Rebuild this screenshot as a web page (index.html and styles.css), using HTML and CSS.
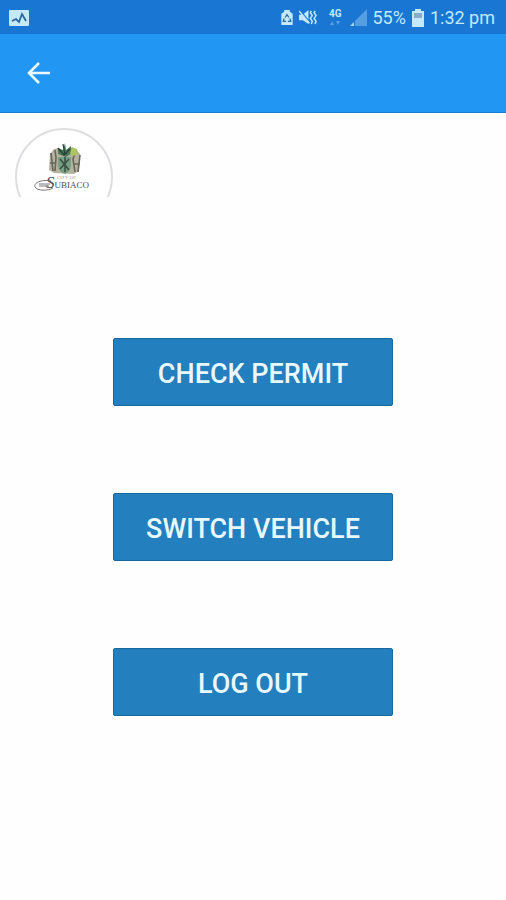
FILE: index.html
```html
<!DOCTYPE html>
<html lang="en">
<head>
<meta charset="utf-8">
<meta name="viewport" content="width=device-width, initial-scale=1">
<title>Permits</title>
<link rel="stylesheet" href="styles.css">
</head>
<body>
<div class="status-bar">
  <svg class="activity-icon" width="20" height="16" viewBox="0 0 20 16" aria-hidden="true">
    <rect width="20" height="16" rx="1" fill="#c3e9fa"/>
    <path d="M3 11l4-2 3 3 3-8 4 7" fill="none" stroke="#28689c" stroke-width="1.8"/>
  </svg>
  <div class="status-info">
    <svg class="saver-icon" width="12" height="17" viewBox="0 0 12 18" aria-hidden="true">
      <path d="M3 3V1h6v2l3 2v12H0V5z" fill="#c3e9fa"/>
      <path d="M4 9l2-3 2 3M9 10l1 3H7M5 13H2l1-3" fill="none" stroke="#28689c" stroke-width="1.3"/>
    </svg>
    <svg class="mute-icon" width="18" height="17" viewBox="0 0 19 18" aria-hidden="true">
      <path d="M0 6h4l6-5v15l-6-4H0z" fill="#c3e9fa"/>
      <path d="M1 2l11 13" stroke="#1976d2" stroke-width="2"/>
      <path d="M0 2l11 13" stroke="#c3e9fa" stroke-width="1.6"/>
      <path d="M13 2l-1 2 2 3-2 3 2 3-1 3M17 2l-1 2 2 3-2 3 2 3-1 3" fill="none" stroke="#c3e9fa" stroke-width="1.6"/>
    </svg>
    <div class="network">
      <span>4G</span>
      <svg width="10" height="5" viewBox="0 0 10 5" aria-hidden="true">
        <path d="M0 4l2-4 2 4zM6 0h4L8 4z" fill="#599fdf"/>
      </svg>
    </div>
    <svg class="signal-icon" width="17" height="17" viewBox="0 0 17 17" aria-hidden="true">
      <path d="M17 0v17H5v-5z" fill="#559fe1"/>
      <path d="M0 17l4-4v4z" fill="#a5d7f5"/>
    </svg>
    <span class="percent">55%</span>
    <svg class="battery-icon" width="12" height="18" viewBox="0 0 12 18" aria-hidden="true">
      <path d="M3 2V0h6v2h3v16H0V2z" fill="#c3e9fa"/>
      <path d="M2 4h8v5H2z" fill="#88acc9"/>
    </svg>
    <time>1:32 pm</time>
  </div>
</div>
<header class="app-bar">
  <button class="back" type="button" aria-label="Back">
    <svg width="24" height="24" viewBox="0 0 24 24" aria-hidden="true">
      <path d="M23 12H2M12 2L2 12l10 10" fill="none" stroke="#edf9ff" stroke-width="2.6"/>
    </svg>
  </button>
</header>
<main>
  <svg class="logo" width="98" height="69" viewBox="0 0 98 69" role="img" aria-label="City of Subiaco">
    <circle cx="49" cy="49" r="48" fill="#fff" stroke="#dedee1" stroke-width="2"/>
    <path d="M35 26l4-5 5-1 2 5 7 0 3-5 5 1 4 5-1 17-5 3-20-1-5-3z" fill="#b5b3a0"/>
    <path d="M36 25l2 18M40 22l1 8-1 13M61 22l-3 9 2 13M65 27l-2 17M35 35h6M58 36h7" fill="none" stroke="#65675b" stroke-width="1.6"/>
    <path d="M43 29h13v9q-1 6-6 8-6-2-7-8z" fill="#789f81"/>
    <path d="M45 31l9 11M54 31l-9 10M50 29v15" stroke="#344d41" stroke-width="1.5"/>
    <path d="M50 15l1 7 5-4 1 7-6 4-8-3 0-6 5 2z" fill="#4a7857"/>
    <path d="M43 20l6 7 6-6M48 16l2 11" fill="none" stroke="#263f35" stroke-width="1.2"/>
    <path d="M57 19l5 2 1 5-5 2-3-3z" fill="#adc461"/>
    <text class="logo-small" x="42" y="51">CITY OF</text>
    <text class="logo-name" x="31" y="60"><tspan class="logo-initial">S</tspan>UBIACO</text>
    <path d="M36 53c-9-2-18 2-16 6 2 4 13 4 18 1M24 56h11M24 58h10" fill="none" stroke="#77767b" stroke-width="1"/>
  </svg>
  <nav class="actions" aria-label="Actions">
    <button type="button">CHECK PERMIT</button>
    <button type="button">SWITCH VEHICLE</button>
    <button type="button">LOG OUT</button>
  </nav>
</main>
</body>
</html>
```
FILE: styles.css
```css
* {
  box-sizing: border-box;
}

body {
  margin: 0;
  background: #fefefe;
  font-family: Roboto, "Liberation Sans", sans-serif;
}

svg {
  display: block;
  flex: none;
}

.status-bar {
  display: flex;
  align-items: center;
  justify-content: space-between;
  height: 34px;
  padding: 1px 11px 0 9px;
  background: #1976d2;
  color: #c3e9fa;
  font-size: 18px;
  line-height: 24px;
}

.status-info {
  display: flex;
  align-items: center;
  gap: 6px;
}

.network {
  display: flex;
  flex-direction: column;
  align-items: center;
  gap: 2px;
  margin: 0 2px 0 6px;
  font-size: 10px;
  font-weight: 700;
  line-height: 10px;
}

.app-bar {
  display: flex;
  align-items: center;
  height: 79px;
  padding: 0 27px;
  border-bottom: 1px solid #1a7cd0;
  background: #2196f3;
}

.back {
  padding: 0;
  border: 0;
  background: none;
}

main {
  padding: 15px;
}

.actions {
  display: flex;
  flex-direction: column;
  align-items: center;
  gap: 87px;
  padding-top: 141px;
}

.actions button {
  width: 59%;
  height: 68px;
  padding: 3px 0 0;
  border: 1px solid #17699f;
  border-radius: 2px;
  background: #237fbd;
  color: #e8f8ff;
  font-family: inherit;
  font-size: 27px;
  font-weight: 500;
  line-height: 32px;
}

.logo-small,
.logo-name {
  font-family: "Liberation Serif", serif;
  fill: #4e4d54;
}

.logo-small {
  font-size: 5px;
  fill: #aaa78c;
}

.logo-initial {
  font-size: 17px;
  font-style: italic;
}

.logo-name {
  font-size: 9px;
}
```
